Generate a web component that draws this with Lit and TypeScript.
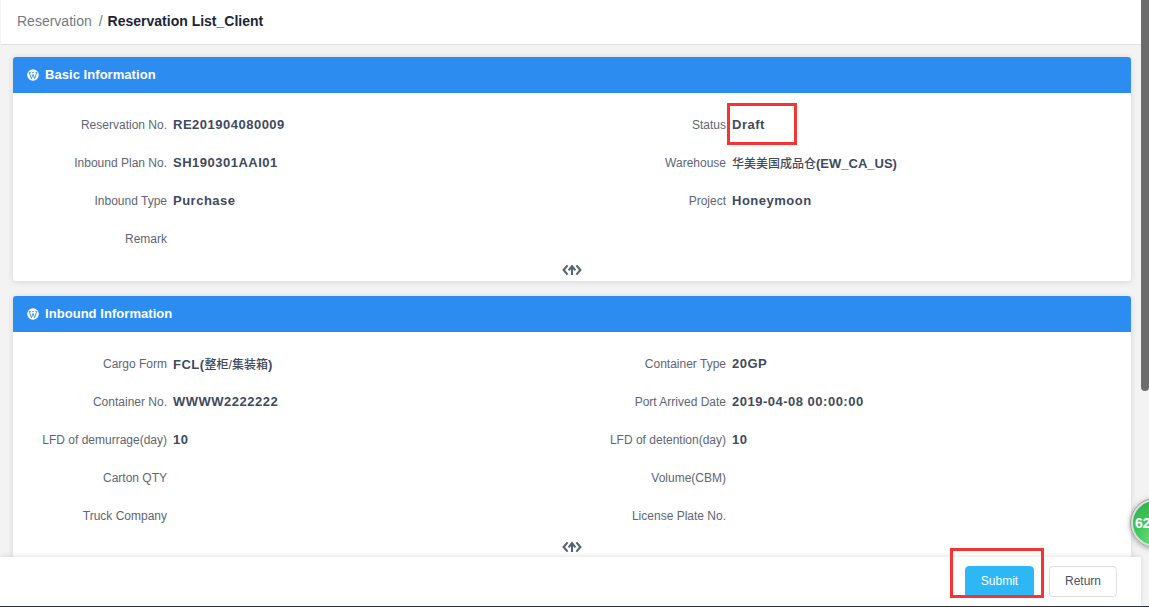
import { LitElement, html, css, svg } from "lit";
import { customElement } from "lit/decorators.js";

type Field = { label: string; value?: unknown };

const cjk = (s: string) => html`<span class="cjk">${s}</span>`;

const basic: Field[] = [
  { label: "Reservation No.", value: "RE201904080009" },
  { label: "Status", value: "Draft" },
  { label: "Inbound Plan No.", value: "SH190301AAI01" },
  { label: "Warehouse", value: html`${cjk("华美美国成品仓")}<span class="tight">(EW_CA_US)</span>` },
  { label: "Inbound Type", value: "Purchase" },
  { label: "Project", value: "Honeymoon" },
  { label: "Remark" },
];

const inbound: Field[] = [
  { label: "Cargo Form", value: html`FCL(${cjk("整柜/集装箱")})` },
  { label: "Container Type", value: "20GP" },
  { label: "Container No.", value: "WWWW2222222" },
  { label: "Port Arrived Date", value: "2019-04-08 00:00:00" },
  { label: "LFD of demurrage(day)", value: "10" },
  { label: "LFD of detention(day)", value: "10" },
  { label: "Carton QTY" },
  { label: "Volume(CBM)" },
  { label: "Truck Company" },
  { label: "License Plate No." },
];

const wpIcon = svg`<svg class="wp" viewBox="0 0 12 12" width="12" height="12" aria-hidden="true">
  <circle cx="6" cy="6" r="5.8" fill="#fff"/>
  <path d="M2.4 3.7 4.4 9.7 6 5.4 7.6 9.7 9.6 3.7M1.8 3.6H3.8M5.1 3.6H6.9M8.4 3.6H10.2" fill="none" stroke="#2d8cf0" stroke-width="0.9"/>
</svg>`;

const toggleIcon = svg`<svg viewBox="0 0 20 12" width="20" height="12" aria-hidden="true">
  <path d="M5.6 1.4 1.6 6 5.6 10.6M14.4 1.4 18.4 6 14.4 10.6" fill="none" stroke="#596271" stroke-width="2.1"/>
  <path d="M10 11V3M6.6 6.4 10 2.2 13.4 6.4" fill="none" stroke="#596271" stroke-width="2.1"/>
</svg>`;

@customElement("app-root")
export class AppRoot extends LitElement {
  static styles = css`
    :host {
      display: flex;
      flex-direction: column;
      position: relative;
      width: 100%;
      height: 607px;
      overflow: hidden;
      background: #f3f3f3;
      font-family: "Liberation Sans", Arial, "Noto Sans CJK SC", sans-serif;
      font-size: 12px;
      color: #495060;
    }
    .frame {
      flex: 1;
      min-height: 0;
      display: flex;
    }
    .page {
      flex: 1;
      min-width: 0;
      display: flex;
      flex-direction: column;
    }
    .scrollbar {
      width: 8px;
      flex: none;
      background: #f3f3f3;
    }
    .thumb {
      height: 391px;
      background: #6c6c6c;
      border-radius: 0 0 4px 4px;
    }
    .crumbs {
      flex: none;
      box-sizing: border-box;
      height: 45px;
      margin-left: 1px;
      padding: 0 0 2px 16px;
      display: flex;
      align-items: center;
      background: #fff;
      border-bottom: 1px solid #dfdfdf;
      font-size: 14px;
      color: #737a86;
    }
    .sep {
      margin: 0 5px 0 7px;
    }
    .current {
      font-weight: 700;
      color: #1c2438;
    }
    .content {
      flex: 1;
      min-height: 0;
      overflow: hidden;
      padding: 12px 10px 0 13px;
      display: flex;
      flex-direction: column;
      gap: 15px;
    }
    .card {
      flex: none;
      background: #fff;
      border-radius: 3px;
      box-shadow: 0 1px 6px rgba(0, 0, 0, 0.12);
    }
    .card-head {
      box-sizing: border-box;
      height: 36px;
      padding: 0 0 2px 14px;
      display: flex;
      align-items: center;
      gap: 6px;
      background: #2d8cf0;
      border-radius: 3px 3px 0 0;
      color: #fff;
      font-size: 13px;
      font-weight: 700;
      letter-spacing: 0.05px;
    }
    .wp {
      display: block;
      margin-top: 2px;
    }
    .grid {
      padding-top: 12px;
      display: grid;
      grid-template-columns: 1fr 1fr;
      grid-auto-rows: 38px;
    }
    .field {
      display: flex;
      align-items: center;
      gap: 6px;
      min-width: 0;
    }
    .label {
      flex: none;
      width: 154px;
      padding-top: 2px;
      text-align: right;
      color: #5e6673;
    }
    .value {
      font-size: 13px;
      font-weight: 700;
      letter-spacing: 0.5px;
      color: #3f4a5e;
      white-space: nowrap;
    }
    .cjk {
      font-size: 12px;
      font-weight: 500;
      letter-spacing: 0;
    }
    .tight {
      letter-spacing: 0;
    }
    .toggle {
      height: 24px;
      display: flex;
      align-items: flex-start;
      justify-content: center;
    }
    .toggle svg {
      display: block;
      margin-top: 7px;
    }
    .footer {
      flex: none;
      box-sizing: border-box;
      height: 49px;
      position: relative;
      z-index: 1;
      background: #fff;
      box-shadow: 0 -1px 5px rgba(0, 0, 0, 0.1);
      display: flex;
      align-items: flex-start;
      justify-content: flex-end;
      gap: 15px;
      padding: 9px 24px 0 0;
    }
    .btn {
      box-sizing: border-box;
      width: 69px;
      height: 32px;
      border-radius: 4px;
      font: inherit;
      padding: 0 0 2px;
    }
    .primary {
      border: 1px solid #2db7f5;
      background: #2db7f5;
      color: #fff;
    }
    .ghost {
      width: 68px;
      height: 31px;
      border: 1px solid #dddee1;
      background: #fff;
      color: #495060;
    }
    .baseline {
      flex: none;
      height: 1px;
      background: #2b3038;
    }
    .mark {
      position: absolute;
      box-sizing: border-box;
      border: 3px solid #f73434;
      z-index: 3;
      pointer-events: none;
    }
    .mark-status {
      left: 727px;
      top: 103px;
      width: 70px;
      height: 42px;
    }
    .mark-submit {
      left: 950px;
      top: 548px;
      width: 94px;
      height: 50px;
    }
    .badge {
      position: absolute;
      z-index: 2;
      left: 1130px;
      top: 498px;
      width: 50px;
      height: 50px;
      box-sizing: border-box;
      border-radius: 50%;
      border: 3px solid #d9dedb;
      outline: 1px solid #9aa39d;
      outline-offset: -1px;
      background: radial-gradient(circle at 50% 85%, #6fe07f 0, #3fc65a 45%, #2fae49 100%);
      box-shadow: 0 1px 5px rgba(0, 0, 0, 0.35);
      color: #fff;
      font-size: 14px;
      font-weight: 700;
      display: flex;
      align-items: center;
      padding-left: 2px;
    }
  `;

  private renderCard(title: string, fields: Field[]) {
    return html`
      <section class="card">
        <header class="card-head">${wpIcon}<span>${title}</span></header>
        <div class="grid">
          ${fields.map(
            (f) => html`<div class="field">
              <span class="label">${f.label}</span>
              ${f.value ? html`<span class="value">${f.value}</span>` : null}
            </div>`
          )}
        </div>
        <div class="toggle">${toggleIcon}</div>
      </section>
    `;
  }

  render() {
    return html`
      <div class="frame">
        <div class="page">
          <nav class="crumbs">
            <span>Reservation</span><span class="sep">/</span
            ><span class="current">Reservation List_Client</span>
          </nav>
          <main class="content">
            ${this.renderCard("Basic Information", basic)}
            ${this.renderCard("Inbound Information", inbound)}
          </main>
          <footer class="footer">
            <button class="btn primary">Submit</button>
            <button class="btn ghost">Return</button>
          </footer>
        </div>
        <div class="scrollbar"><div class="thumb"></div></div>
      </div>
      <div class="baseline"></div>
      <div class="badge">62</div>
      <div class="mark mark-status"></div>
      <div class="mark mark-submit"></div>
    `;
  }
}
